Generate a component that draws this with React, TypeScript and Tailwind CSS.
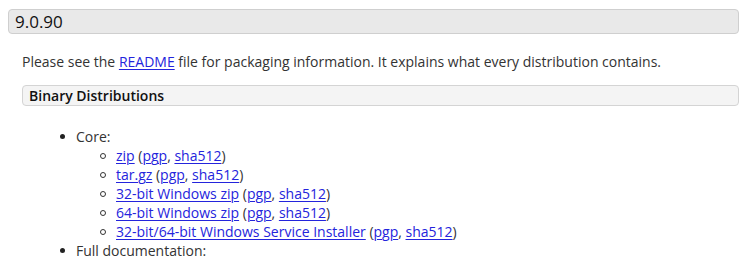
import React from "react";

const L = ({ children }: { children: React.ReactNode }) => (
  <a href="#" className="text-[#2424dc] underline underline-offset-[2px] decoration-1">{children}</a>
);

const Item = ({ name }: { name: string }) => (
  <li className="flex items-center h-[19px]">
    <span className="w-[6px] h-[6px] rounded-full border border-[#333] mr-[10px] ml-[-13px]" />
    <span><L>{name}</L> (<L>pgp</L>, <L>sha512</L>)</span>
  </li>
);

export default function App() {
  return (
    <div className="bg-white w-[746px] h-[259px] overflow-hidden text-[#333]" style={{ fontFamily: '"Open Sans", sans-serif' }}>
      <div className="pt-[9px] pl-[8px] pr-[7px]">
        <div className="h-[25px] bg-[#e9e9e9] border border-[#cfcfcf] rounded-[4px] flex items-center pl-[6px] text-[17px] text-[#111]">
          9.0.90
        </div>
        <div className="pl-[14px]">
          <p className="text-[14px] mt-[18px] leading-[19px]">
            Please see the <L>README</L> file for packaging information. It explains what every distribution contains.
          </p>
          <div className="mt-[14px] h-[21px] bg-[#f4f4f4] border border-[#d4d4d4] rounded-[4px] flex items-center pl-[6px] text-[14px] font-semibold text-[#111]">
            Binary Distributions
          </div>
          <ul className="mt-[21px] text-[14px] leading-[19px] pl-[54px]">
            <li className="relative">
              <span className="absolute left-[-16px] top-[7px] w-[5px] h-[5px] rounded-full bg-[#222]" />
              Core:
              <ul className="pl-[37px]">
                <Item name="zip" />
                <Item name="tar.gz" />
                <Item name="32-bit Windows zip" />
                <Item name="64-bit Windows zip" />
                <Item name="32-bit/64-bit Windows Service Installer" />
              </ul>
            </li>
            <li className="relative">
              <span className="absolute left-[-16px] top-[7px] w-[5px] h-[5px] rounded-full bg-[#222]" />
              Full documentation:
            </li>
          </ul>
        </div>
      </div>
    </div>
  );
}
